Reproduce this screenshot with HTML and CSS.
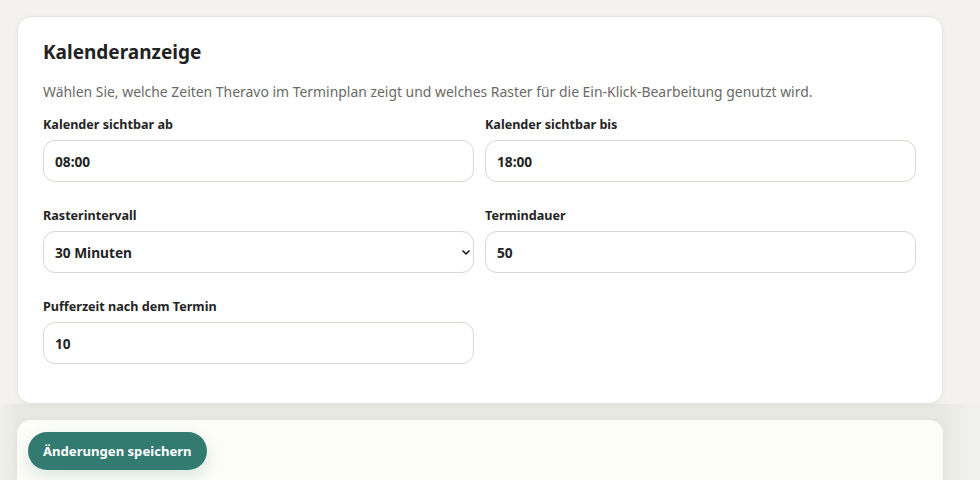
FILE: index.html
```html
<!DOCTYPE html>
<html lang="de">
<head>
<meta charset="utf-8">
<link rel="stylesheet" href="styles.css">
</head>
<body>
<main class="page">
  <section class="card">
    <h2 class="title">Kalenderanzeige</h2>
    <p class="desc">Wählen Sie, welche Zeiten Theravo im Terminplan zeigt und welches Raster für die Ein-Klick-Bearbeitung genutzt wird.</p>
    <div class="grid">
      <label class="field">
        <span class="label">Kalender sichtbar ab</span>
        <input class="input" type="text" value="08:00">
      </label>
      <label class="field">
        <span class="label">Kalender sichtbar bis</span>
        <input class="input" type="text" value="18:00">
      </label>
      <label class="field">
        <span class="label">Rasterintervall</span>
        <span class="select">
          <span>30 Minuten</span>
          <svg class="chev" viewBox="0 0 8 5" width="8" height="5"><path d="M1 1l3 3 3-3" fill="none" stroke="#222" stroke-width="1.7" stroke-linecap="round" stroke-linejoin="round"/></svg>
        </span>
      </label>
      <label class="field">
        <span class="label">Termindauer</span>
        <input class="input" type="text" value="50">
      </label>
      <label class="field">
        <span class="label">Pufferzeit nach dem Termin</span>
        <input class="input" type="text" value="10">
      </label>
    </div>
  </section>
  <div class="footer-wrap">
    <div class="footer">
      <button class="btn">Änderungen speichern</button>
    </div>
  </div>
</main>
</body>
</html>
```
FILE: styles.css
```css
* { box-sizing: border-box; }
html, body { margin: 0; height: 100%; }
body {
  background: #f3f2ee;
  font-family: "Noto Sans", "Open Sans", sans-serif;
  color: #242424;
  overflow: hidden;
}
.page {
  padding: 16px 37px 0 17px;
}
.card {
  background: #fff;
  border: 1px solid #e6e3dc;
  border-radius: 14px;
  padding: 21px 26px 39px 25px;
  box-shadow: 0 2px 6px rgba(60, 55, 40, 0.04);
  position: relative;
  z-index: 1;
}
.title {
  margin: 0;
  font-size: 19px;
  font-weight: 700;
  line-height: 28px;
  color: #222;
}
.desc {
  margin: 16px 0 0;
  font-size: 13.93px;
  line-height: 20px;
  color: #6a6a66;
}
.grid {
  margin-top: 14px;
  display: grid;
  grid-template-columns: 1fr 1fr;
  column-gap: 11px;
  row-gap: 25px;
}
.field {
  display: flex;
  flex-direction: column;
  gap: 7px;
}
.label {
  font-size: 12.6px;
  font-weight: 700;
  line-height: 17px;
  color: #242424;
}
.input, .select {
  height: 42px;
  border: 1px solid #ddd5c9;
  border-radius: 12px;
  background: #fff;
  padding: 0 11px;
  font-family: inherit;
  font-size: 13.7px;
  font-weight: 700;
  color: #1f2424;
  width: 100%;
  outline: none;
}
.select {
  display: flex;
  align-items: center;
  justify-content: space-between;
  padding: 0 3px 0 11px;
}
.chev { display: block; }
.footer-wrap {
  margin: 0 -37px 0 -17px;
  padding: 16px 37px 0 17px;
  background: linear-gradient(90deg, #f0f0ec 0, #e9e9e4 18px, #e9e9e4 944px, #f1f1ed 975px);
  height: 100vh;
}
.footer {
  background: #fdfdf8;
  border-radius: 14px;
  padding: 12px 11px;
  height: 120px;
  box-shadow: 0 0 10px rgba(60, 60, 40, 0.04);
}
.btn {
  border: 0;
  background: #337b71;
  color: #fff;
  font-family: inherit;
  font-size: 13.1px;
  font-weight: 700;
  height: 38px;
  padding: 0 15px 1px;
  border-radius: 19px;
  box-shadow: 0 6px 16px rgba(51, 123, 113, 0.18);
}
```
